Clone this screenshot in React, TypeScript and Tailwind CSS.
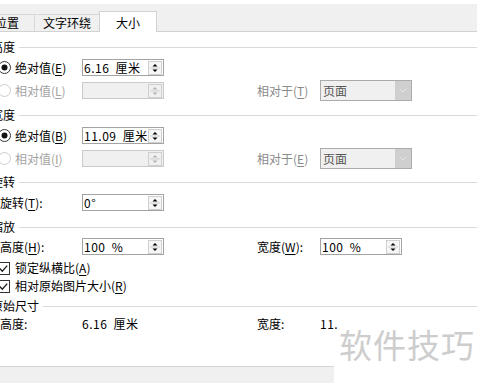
const FONT = "font-['Noto_Sans_CJK_SC','Noto_Sans',sans-serif]"

function Key({ k }: { k: string }) {
  return (
    <>
      (<span className="underline underline-offset-[2px] decoration-[1px]">{k}</span>)
    </>
  )
}

function Spinner({ disabled }: { disabled?: boolean }) {
  const c = disabled ? '#b4b4b4' : '#000'
  return (
    <svg width="14" height="14" viewBox="0 0 14 14" className="mr-[1px] shrink-0">
      <rect x="0.5" y="0.5" width="13" height="13" fill={disabled ? '#f0f0f0' : '#f6f6f6'} stroke="#cfcfcf" />
      <line x1="2" y1="7" x2="12" y2="7" stroke="#cfcfcf" />
      <path d="M4.5 5.5 L7 3 L9.5 5.5Z" fill={c} />
      <path d="M4.5 8.5 L7 11 L9.5 8.5Z" fill={c} />
    </svg>
  )
}

function NumInput({ value, disabled }: { value?: string; disabled?: boolean }) {
  return (
    <div
      className={`w-[82px] h-[17px] flex items-center justify-between border ${
        disabled ? 'bg-[#f0f0f0] border-[#cacaca]' : 'bg-white border-[#a3a3a3]'
      }`}
    >
      <span className="pl-[1px] text-[12px] leading-none text-black whitespace-nowrap tracking-[0.5px] [word-spacing:3px]">
        {value}
      </span>
      <Spinner disabled={disabled} />
    </div>
  )
}

function Select({ label }: { label: string }) {
  return (
    <div className="w-[92px] h-[21px] flex items-stretch border border-[#ababab] bg-[#f0f0f0]">
      <span className="flex-1 pl-[2px] flex items-center text-[12px] text-[#555]">{label}</span>
      <div className="w-[16px] bg-[#cfcfcf] flex items-center justify-center">
        <svg width="8" height="5" viewBox="0 0 8 5">
          <path d="M0.5 0.5 L4 4 L7.5 0.5" fill="none" stroke="#e6e6e6" />
        </svg>
      </div>
    </div>
  )
}

function Radio({ checked, disabled }: { checked?: boolean; disabled?: boolean }) {
  return (
    <svg width="13" height="13" viewBox="0 0 13 13" className="ml-[-2px] mr-[4px] shrink-0">
      <circle cx="6.5" cy="6.5" r="6" fill="#fff" stroke={disabled ? '#cdcdcd' : '#333'} />
      {checked && <circle cx="6.5" cy="6.5" r="3" fill="#111" />}
    </svg>
  )
}

function Check() {
  return (
    <svg width="13" height="13" viewBox="0 0 13 13" className="ml-[-3px] mr-[5px] shrink-0">
      <rect x="0.5" y="0.5" width="12" height="12" fill="#fff" stroke="#333" />
      <path d="M2.8 6.6 L5.3 9.2 L10.2 3.6" fill="none" stroke="#222" strokeWidth="1.4" />
    </svg>
  )
}

function Header({ title, className = '' }: { title: string; className?: string }) {
  return (
    <div className={`flex items-center h-4 ${className}`}>
      <span className="text-[12px] leading-none text-black whitespace-nowrap">{title}</span>
      <div className="flex-1 h-px bg-[#dadada] ml-[4px]" />
    </div>
  )
}

function Row({ children, className = 'h-[23px]' }: { children: React.ReactNode; className?: string }) {
  return <div className={`flex items-center pl-[9px] text-[12px] text-black ${className}`}>{children}</div>
}

export default function App() {
  return (
    <div className={`relative w-[477px] h-[383px] overflow-hidden bg-white ${FONT}`}>
      {/* Tabs */}
      <div className="mt-[4px] h-[28px] bg-[#f0f0f0] border-b border-[#d2d2d2] flex items-end">
        <div className="ml-[-20px] w-[55px] h-[17px] border-r border-t border-[#d8d8d8] flex items-center justify-center text-[12px] text-black">
          位置
        </div>
        <div className="w-[64px] h-[17px] border-t border-[#d8d8d8] flex items-center justify-center text-[12px] text-black">
          文字环绕
        </div>
        <div className="w-[58px] h-[21px] mb-[-1px] bg-white border border-b-0 border-[#d2d2d2] flex items-center justify-center pt-[2px] text-[12px] text-black">
          大小
        </div>
      </div>

      <div className="ml-[-9px]">
        {/* 高度 */}
        <Header title="高度" className="mt-[7px]" />
        <Row className="h-[23px] mt-[1px]">
          <div className="w-[82px] flex items-center">
            <Radio checked />
            <span>绝对值<Key k="E" /></span>
          </div>
          <NumInput value="6.16 厘米" />
        </Row>
        <Row>
          <div className="w-[82px] flex items-center text-[#a3a3a3]">
            <Radio disabled />
            <span>相对值<Key k="L" /></span>
          </div>
          <NumInput disabled />
          <span className="ml-[93px] w-[63px] text-[#8a8a8a]">相对于<Key k="T" /></span>
          <Select label="页面" />
        </Row>

        {/* 宽度 */}
        <Header title="宽度" className="mt-[5px]" />
        <Row className="h-[23px] mt-[1px]">
          <div className="w-[82px] flex items-center">
            <Radio checked />
            <span>绝对值<Key k="B" /></span>
          </div>
          <NumInput value="11.09 厘米" />
        </Row>
        <Row>
          <div className="w-[82px] flex items-center text-[#a3a3a3]">
            <Radio disabled />
            <span>相对值<Key k="I" /></span>
          </div>
          <NumInput disabled />
          <span className="ml-[93px] w-[63px] text-[#8a8a8a]">相对于<Key k="E" /></span>
          <Select label="页面" />
        </Row>

        {/* 旋转 */}
        <Header title="旋转" className="mt-[4px]" />
        <Row className="h-[23px] mt-[1px]">
          <span className="w-[82px]">旋转<Key k="T" />:</span>
          <NumInput value="0°" />
        </Row>

        {/* 缩放 */}
        <Header title="缩放" className="mt-[5px]" />
        <Row className="h-[21px] mt-[1px]">
          <span className="w-[82px]">高度<Key k="H" />:</span>
          <NumInput value="100 %" />
          <span className="ml-[93px] w-[63px]">宽度<Key k="W" />:</span>
          <NumInput value="100 %" />
        </Row>
        <Row className="h-[18px] mt-[2px]">
          <Check />
          <span>锁定纵横比<Key k="A" /></span>
        </Row>
        <Row className="h-[18px]">
          <Check />
          <span>相对原始图片大小<Key k="R" /></span>
        </Row>

        {/* 原始尺寸 */}
        <Header title="原始尺寸" className="mt-[3px]" />
        <Row className="h-[18px] mt-[1px]">
          <span className="w-[82px]">高度:</span>
          <span className="w-[82px] tracking-[0.5px] [word-spacing:3px]">6.16 厘米</span>
          <span className="ml-[93px] w-[63px]">宽度:</span>
          <span className="tracking-[0.5px]">11.</span>
        </Row>
      </div>

      {/* Bottom bar */}
      <div className="absolute left-0 bottom-0 w-[334px] h-[17px] bg-[#f0f0f0] border-t border-[#d6d6d6]" />

      {/* Watermark */}
      <div className="absolute left-[339px] top-[328px] text-[33px] leading-none tracking-[1px] text-[#cdcdcd] whitespace-nowrap">
        软件技巧
      </div>
    </div>
  )
}
